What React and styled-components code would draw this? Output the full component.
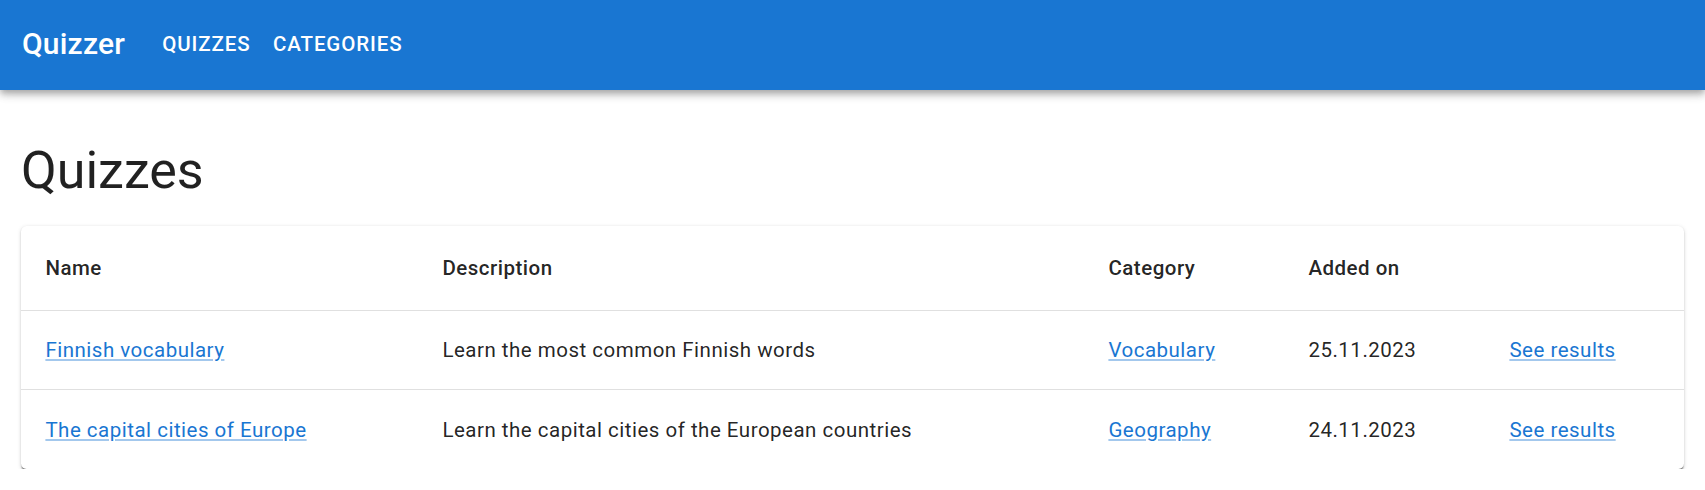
import React from "react";
import styled, { createGlobalStyle } from "styled-components";

const GlobalStyle = createGlobalStyle`
  body {
    margin: 0;
    background: #fff;
    font-family: Roboto, "Liberation Sans", Arial, sans-serif;
    color: rgba(0, 0, 0, 0.87);
  }
`;

const AppBar = styled.header`
  height: 90px;
  background: #1976d2;
  color: #fff;
  display: flex;
  align-items: center;
  padding: 0 22px;
  box-shadow: 0px 3px 6px -1px rgba(0, 0, 0, 0.2), 0px 6px 7px 0px rgba(0, 0, 0, 0.14),
    0px 1px 14px 0px rgba(0, 0, 0, 0.12);
`;

const Brand = styled.div`
  font-size: 30px;
  font-weight: 500;
  letter-spacing: 0.2px;
  margin-right: 26px;
  margin-top: -4px;
`;

const NavButton = styled.a`
  font-size: 20.5px;
  font-weight: 500;
  letter-spacing: 0.9px;
  text-transform: uppercase;
  padding: 8px 11.2px;
  color: #fff;
  text-decoration: none;
  margin-top: -3px;
`;

const Main = styled.main`
  padding: 0 21px;
`;

const Heading = styled.h1`
  font-size: 52px;
  font-weight: 400;
  line-height: 60px;
  margin: 51px 0 25px;
`;

const Card = styled.div`
  background: #fff;
  border-radius: 5.6px;
  overflow: hidden;
  box-shadow: 0px 3px 1.4px -1.4px rgba(0, 0, 0, 0.32), 0px 1.4px 1.4px 0px rgba(0, 0, 0, 0.18),
    0px 1.4px 4px 0px rgba(0, 0, 0, 0.14);
`;

const Table = styled.table`
  width: 100%;
  border-collapse: collapse;
  table-layout: fixed;
  font-size: 20.5px;
  letter-spacing: 0.5px;
`;

const HeadCell = styled.th`
  text-align: left;
  font-weight: 500;
  height: 84px;
  padding: 0 20.4px 0 24.4px;
  border-bottom: 1px solid #e0e0e0;
`;

const BodyRow = styled.tr`
  &:last-child td {
    border-bottom: 0;
    height: 79px;
  }
`;

const Cell = styled.td`
  height: 78px;
  padding: 0 20.4px 0 24.4px;
  border-bottom: 1px solid #e0e0e0;
  font-weight: 400;
`;

const Link = styled.a`
  color: #1976d2;
  text-decoration: underline;
  text-decoration-color: rgba(25, 118, 210, 0.4);
  cursor: pointer;
`;

const quizzes = [
  {
    name: "Finnish vocabulary",
    description: "Learn the most common Finnish words",
    category: "Vocabulary",
    added: "25.11.2023",
  },
  {
    name: "The capital cities of Europe",
    description: "Learn the capital cities of the European countries",
    category: "Geography",
    added: "24.11.2023",
  },
];

export default function App() {
  return (
    <>
      <GlobalStyle />
      <AppBar>
        <Brand>Quizzer</Brand>
        <NavButton>Quizzes</NavButton>
        <NavButton>Categories</NavButton>
      </AppBar>
      <Main>
        <Heading>Quizzes</Heading>
        <Card>
          <Table>
            <colgroup>
              <col style={{ width: 397 }} />
              <col style={{ width: 666 }} />
              <col style={{ width: 200 }} />
              <col style={{ width: 201 }} />
              <col />
            </colgroup>
            <thead>
              <tr>
                <HeadCell>Name</HeadCell>
                <HeadCell>Description</HeadCell>
                <HeadCell>Category</HeadCell>
                <HeadCell>Added on</HeadCell>
                <HeadCell />
              </tr>
            </thead>
            <tbody>
              {quizzes.map((q) => (
                <BodyRow key={q.name}>
                  <Cell>
                    <Link>{q.name}</Link>
                  </Cell>
                  <Cell>{q.description}</Cell>
                  <Cell>
                    <Link>{q.category}</Link>
                  </Cell>
                  <Cell>{q.added}</Cell>
                  <Cell>
                    <Link>See results</Link>
                  </Cell>
                </BodyRow>
              ))}
            </tbody>
          </Table>
        </Card>
      </Main>
    </>
  );
}
